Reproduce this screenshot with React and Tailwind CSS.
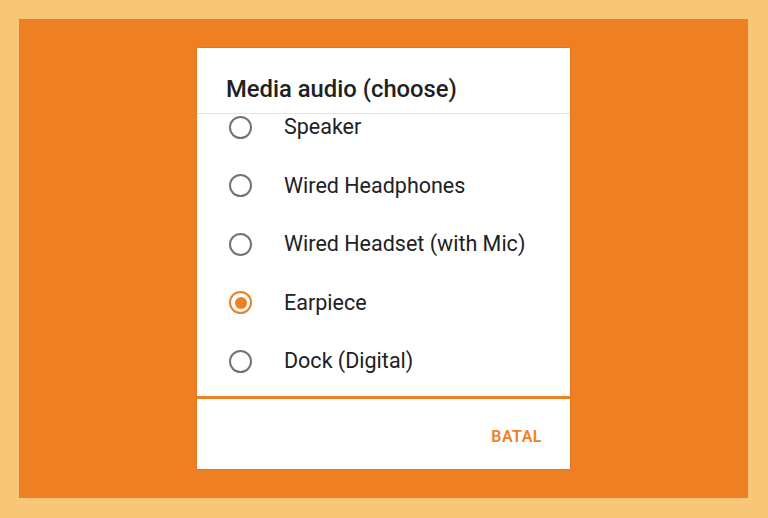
import React from "react";

const options = [
  { label: "Speaker", checked: false },
  { label: "Wired Headphones", checked: false },
  { label: "Wired Headset (with Mic)", checked: false },
  { label: "Earpiece", checked: true },
  { label: "Dock (Digital)", checked: false },
];

const Radio = ({ checked }) => (
  <div
    className={`w-[23px] h-[23px] rounded-full border-[2.5px] flex items-center justify-center shrink-0 ${
      checked ? "border-[#ef7f22]" : "border-[#737373]"
    }`}
  >
    {checked && <div className="w-[12px] h-[12px] rounded-full bg-[#ef7f22]" />}
  </div>
);

const App = () => {
  return (
    <div
      className="w-[768px] h-[518px] bg-[#f8c677] pt-[19px] pl-[19px]"
      style={{ fontFamily: "Roboto, 'Noto Sans', sans-serif" }}
    >
      <div className="w-[729px] h-[479px] bg-[#ee7f22] flex justify-center pt-[29px]">
        <div className="w-[373px] h-[421px] bg-white flex flex-col shadow-[0_0_1px_rgba(0,0,0,0.3)]">
          <div className="h-[66px] flex items-center pl-[29px] pt-[18px] border-b border-[#e3e3e3]">
            <h1 className="text-[23.8px] font-medium text-[#212121]">Media audio (choose)</h1>
          </div>
          <div className="h-[282px] overflow-hidden">
            <ul className="-mt-[16px]">
              {options.map((o) => (
                <li key={o.label} className="h-[58.5px] flex items-center pl-[32px]">
                  <Radio checked={o.checked} />
                  <span className="ml-[32px] text-[21.5px] text-[#212121]">{o.label}</span>
                </li>
              ))}
            </ul>
          </div>
          <div className="h-[3px] bg-[#ee7f22]" />
          <div className="flex-1 flex items-center justify-end pr-[28px] pt-[6px]">
            <button className="text-[16px] font-semibold tracking-[0.5px] text-[#ef7f22]">BATAL</button>
          </div>
        </div>
      </div>
    </div>
  );
};

export default App;
